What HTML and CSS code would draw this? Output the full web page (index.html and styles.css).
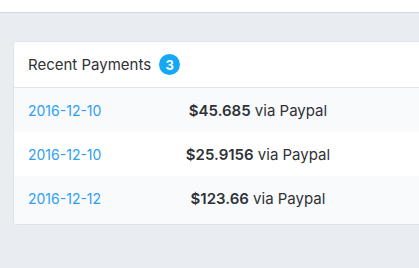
FILE: index.html
```html
<!DOCTYPE html>
<html>
<head>
<meta charset="utf-8">
<link rel="stylesheet" href="styles.css">
</head>
<body>
<div class="topbar"></div>
<main class="content">
  <section class="card">
    <header class="card-header">
      <h2 class="card-title">Recent Payments</h2>
      <span class="badge">3</span>
    </header>
    <div class="rows">
      <div class="row striped">
        <a class="date">2016-12-10</a>
        <span class="amount"><b>$45.685</b> via Paypal</span>
      </div>
      <div class="row">
        <a class="date">2016-12-10</a>
        <span class="amount"><b>$25.9156</b> via Paypal</span>
      </div>
      <div class="row striped last">
        <a class="date">2016-12-12</a>
        <span class="amount"><b>$123.66</b> via Paypal</span>
      </div>
    </div>
  </section>
</main>
</body>
</html>
```
FILE: styles.css
```css
* { box-sizing: border-box; }
html, body { margin: 0; padding: 0; }
body {
  width: 419px;
  height: 268px;
  overflow: hidden;
  background: #e9edf2;
  font-family: "Inter", "Liberation Sans", sans-serif;
  color: #2f3237;
}
.topbar {
  height: 13px;
  background: #ffffff;
  border-bottom: 1px solid #d3dae1;
}
.content {
  padding: 28px 0 0 13px;
}
.card {
  width: 460px;
  background: #ffffff;
  border: 1px solid #dfe4ea;
  border-radius: 4px;
  overflow: hidden;
}
.card-header {
  height: 46px;
  display: flex;
  align-items: center;
  gap: 8px;
  padding: 0 14px;
  border-bottom: 1px solid #dfe4ea;
}
.card-title {
  margin: 0;
  font-size: 15px;
  font-weight: 400;
  color: #2f3237;
}
.badge {
  width: 21px;
  height: 21px;
  border-radius: 50%;
  background: #14a8f5;
  color: #fff;
  font-size: 13px;
  font-weight: 700;
  display: flex;
  align-items: center;
  justify-content: center;
}
.row {
  height: 44px;
  display: grid;
  grid-template-columns: 115px 230px;
  align-items: center;
  padding: 0 14px;
  font-size: 15px;
}
.row.last { height: 48px; padding-bottom: 4px; }
.row.striped { background: #f9fafc; }
.date { color: #2e9ff3; font-size: 14px; }
.amount { text-align: center; color: #2f3237; }
.amount b { font-weight: 600; }
```
